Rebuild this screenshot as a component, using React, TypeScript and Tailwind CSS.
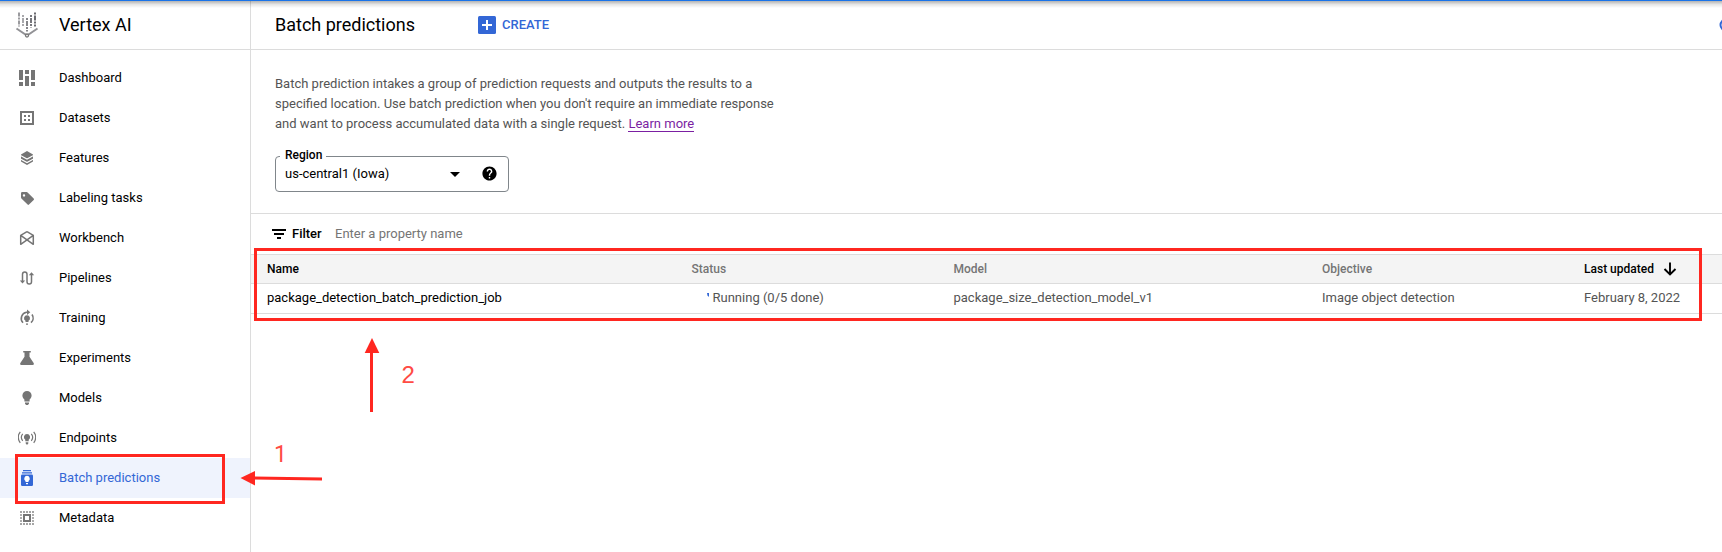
import type { ReactNode } from 'react';
import { MdHelp } from 'react-icons/md';

function Icon({ children }: { children: ReactNode }) {
  return (
    <svg width="18" height="18" viewBox="0 0 18 18" fill="currentColor" className="shrink-0">
      {children}
    </svg>
  );
}

const bulb = 'M9 2a4.6 4.6 0 0 0-4.6 4.6c0 1.7.9 3 2 4V12.4h5.2v-1.8c1.1-1 2-2.3 2-4A4.6 4.6 0 0 0 9 2zM7 13.6h4v1.1L9.9 16H8.1L7 14.7z';

const icons: Record<string, ReactNode> = {
  Dashboard: <path d="M1 1h4v10H1zM1 13h4v4H1zM7 1h4v4H7zM7 7h4v10H7zM13 1h4v10h-4zM13 13h4v4h-4z" />,
  Datasets: <path fillRule="evenodd" d="M2 2h14v14H2zM4 4v10h10V4zM6 6h2v2H6zM10 6h2v2h-2zM6 10h2v2H6zM10 10h2v2h-2z" />,
  Features: (
    <>
      <path d="M9 2l6 3.4v7.2L9 16l-6-3.4V5.4z" />
      <path d="M2.5 6.500L9 10.100l6.500-3.600M2.500 9.900L9 13.500l6.500-3.600" fill="none" stroke="#fff" strokeWidth="1.100" />
    </>
  ),
  'Labeling tasks': <path fillRule="evenodd" d="M4.200 3H8.700l.9.4 6.100 6.100q.7.7 0 1.400l-4.700 4.700q-.7.6-1.400 0L3.400 9.500 3 8.600V4.200Q3 3 4.200 3zM6 5.200a1.200 1.200 0 1 0 0 2.400 1.200 1.200 0 0 0 0-2.400z" />,
  Workbench: <path d="M9 2.600L2.700 6.300v9L15.300 6.300 9 2.600M15.300 6.300v9L2.700 6.300" fill="none" stroke="currentColor" strokeWidth="1.500" strokeLinejoin="round" />,
  Pipelines: (
    <>
      <path d="M4.500 13V5.200a2.200 2.200 0 0 1 4.500 0v7.600a2.200 2.200 0 0 0 4.500 0V5" fill="none" stroke="currentColor" strokeWidth="1.500" />
      <path d="M1.800 11.500h5.400L4.500 14.500zM10.800 6.200h5.400L13.500 3.200z" />
    </>
  ),
  Training: (
    <>
      <path d="M5 13.700A6.200 6.200 0 0 1 8.500 3.300h1.500M14 5.500a6.200 6.200 0 0 1-1 8.200" fill="none" stroke="currentColor" strokeWidth="1.600" />
      <path d="M9 .5l3.300 2.800L9 6.100zM9 6.200a3 3 0 0 0-1.500 5.600V13h3v-1.200A3 3 0 0 0 9 6.200zM8 14.400h2v1.400H8z" />
    </>
  ),
  Experiments: <path d="M5.200 2h7.600v1.500h-1.300v4.300l4.300 6.400q.7 1.800-1.100 1.800H3.300q-1.800 0-1.100-1.800l4.300-6.400V3.500H5.200z" />,
  Models: <path d={bulb} />,
  Endpoints: (
    <>
      <path d="M9 5a3.100 3.100 0 0 0-1.700 5.700V12.300h3.400v-1.600A3.100 3.100 0 0 0 9 5zM7.700 13.300h2.600v1.200l-.7.900H8.400l-.7-.9z" />
      <path d="M4.700 4.800a5.600 5.600 0 0 0 0 7M13.300 4.800a5.600 5.600 0 0 1 0 7M2.300 2.800a8.500 8.500 0 0 0 0 11M15.700 2.800a8.500 8.500 0 0 1 0 11" fill="none" stroke="currentColor" strokeWidth="1.200" />
    </>
  ),
  'Batch predictions': (
    <>
      <path d="M5 1h8v1.200H5zM4 3.200h10v1.300H4z" />
      <rect x="3" y="5.500" width="12" height="11.500" rx="1.200" />
      <path d="M9 6.800a2.900 2.900 0 0 0-1.500 5.300v1h3v-1A2.900 2.900 0 0 0 9 6.800zM8 14h2v1.200H8z" fill="#fff" />
    </>
  ),
  Metadata: (
    <>
      <path d="M6 6h6v6H6z" fill="none" stroke="currentColor" strokeWidth="2" />
      <path d="M2 3h14M2 15h14M3 2v14M15 2v14" fill="none" stroke="currentColor" strokeWidth="1.800" strokeDasharray="2 1" opacity=".65" />
    </>
  ),
};

function VertexLogo() {
  return (
    <svg width="24" height="28" viewBox="0 -1 24 28" fill="none" className="shrink-0">
      <path d="M4 .5v14" stroke="#9a9a9e" strokeWidth="2" strokeDasharray="4 1 2 1" />
      <path d="M8 3v12" stroke="#a8a8ac" strokeWidth="2" strokeDasharray="2 1 5 1" />
      <path d="M12 6v13.500" stroke="#85858a" strokeWidth="2" strokeDasharray="2 1 5 1" />
      <path d="M16 3v12.500" stroke="#77777c" strokeWidth="2" strokeDasharray="2 1 5 1" />
      <path d="M20 .5v14" stroke="#6b6b70" strokeWidth="2" strokeDasharray="2 1 5 1" />
      <path d="M1.500 16.500L12 23.500l10.500-7" stroke="#929296" strokeWidth="2" />
      <circle cx="12" cy="23.500" r="1.500" fill="#fff" stroke="#777" strokeWidth="1.300" />
    </svg>
  );
}

const columns = 'grid grid-cols-[424.5px_262px_368.500px_262px_1fr] items-center pl-4';

export default function App() {
  return (
    <div className="relative flex h-[552px] w-full overflow-hidden bg-white text-[13px] text-black" style={{ fontFamily: 'Roboto, sans-serif' }}>
      <aside className="w-[251px] shrink-0 border-r border-[#dcdcdc]">
        <div className="flex h-[50px] items-center border-b border-[#dcdcdc] pl-[15px]">
          <VertexLogo />
          <h2 className="ml-5 text-[18px]">Vertex AI</h2>
        </div>
        <nav className="pt-2">
          {Object.keys(icons).map((name) => (
            <a
              key={name}
              className={
                name === 'Batch predictions'
                  ? 'flex h-10 items-center gap-[23px] bg-[#eff3fd] pl-[18px] text-[#3367d6]'
                  : 'flex h-10 items-center gap-[23px] pl-[18px]'
              }
            >
              <span className={name === 'Batch predictions' ? 'text-[#3367d6]' : 'text-[#757575]'}>
                <Icon>{icons[name]}</Icon>
              </span>
              <span>{name}</span>
            </a>
          ))}
        </nav>
      </aside>

      <main className="min-w-0 flex-1">
        <header className="flex h-[50px] items-center overflow-hidden border-b border-[#dcdcdc] pl-6">
          <h1 className="w-[203px] text-[18px]">Batch predictions</h1>
          <button className="flex items-center gap-1.5 font-medium text-[#3367d6]">
            <svg width="18" height="18" viewBox="0 0 18 18">
              <rect width="18" height="18" rx="1.500" fill="#3367d6" />
              <path d="M9 4v10M4 9h10" stroke="#fff" strokeWidth="2" />
            </svg>
            CREATE
          </button>
          <svg width="14" height="14" viewBox="0 0 14 14" className="-mr-[11px] ml-auto">
            <circle cx="7" cy="7" r="5.500" fill="none" stroke="#3367d6" strokeWidth="2" />
          </svg>
        </header>

        <section className="h-[164px] border-b border-[#dcdcdc] pt-6 pl-6">
          <p className="leading-5 whitespace-nowrap text-[#545454]">
            Batch prediction intakes a group of prediction requests and outputs the results to a<br />
            specified location. Use batch prediction when you don't require an immediate response<br />
            and want to process accumulated data with a single request.{' '}
            <a className="border-b border-[#7b1fa2] text-[#7b1fa2]">Learn more</a>
          </p>
          <div className="relative mt-[22px] flex h-9 w-[234px] items-center rounded border border-[#80868b] pl-[9px]">
            <span className="absolute -top-[10px] left-1 bg-white pr-1 pl-[5px] text-[12px] leading-4 font-medium">Region</span>
            <span className="w-[165px]">us-central1 (Iowa)</span>
            <svg width="10" height="5" viewBox="0 0 10 5"><path d="M0 0h10L5 5z" /></svg>
            <MdHelp size={17} className="mb-px ml-[20.5px]" />
          </div>
        </section>

        <div className="flex h-10 items-center pl-[21px]">
          <svg width="14" height="10" viewBox="0 0 14 10"><path d="M0 0h14v2H0zM2 4h10v2H2zM5 8h4v2H5z" /></svg>
          <span className="ml-1.5 w-[43px] font-medium">Filter</span>
          <span className="text-[#757575]">Enter a property name</span>
        </div>
        <div className={`${columns} h-[30px] border-y border-[#dcdcdc] bg-[#f4f4f4] text-[12px] font-medium text-[#757575]`}>
          <span className="text-black">Name</span>
          <span>Status</span>
          <span>Model</span>
          <span>Objective</span>
          <span className="flex items-center gap-[9px] text-black">
            Last updated
            <svg width="14" height="14" viewBox="0 0 14 14">
              <path d="M7 .5v11.500M1.500 7L7 12.500 12.500 7" fill="none" stroke="currentColor" strokeWidth="1.900" />
            </svg>
          </span>
        </div>
        <div className={`${columns} h-[30px] border-b border-[#dcdcdc] pb-[2px] text-[#545454]`}>
          <span className="text-black">package_detection_batch_prediction_job</span>
          <span className="flex items-center pl-[15px]">
            <svg width="6" height="12" viewBox="0 0 6 12"><path d="M0 1h2v4L.5 3.500z" fill="#3367d6" /></svg>
            Running (0/5 done)
          </span>
          <span>package_size_detection_model_v1</span>
          <span>Image object detection</span>
          <span>February 8, 2022</span>
        </div>
      </main>

      <div className="absolute inset-x-0 top-0 h-[8px] border-t border-[#1a73e8] bg-linear-to-b from-black/30 via-black/10 to-transparent" />

      <div className="absolute top-[454px] left-[15px] h-[50px] w-[210px] border-3 border-[#ff2720]" />
      <div className="absolute top-[248px] left-[254px] h-[73px] w-[1448px] border-3 border-[#ff2720]" />
      <svg className="absolute top-[470px] left-[240px]" width="84" height="17" viewBox="0 0 84 17" fill="#ff2720">
        <path d="M.5 8L15 1v14.500z" />
        <path d="M14 6.500l68 1v3l-68-1z" />
      </svg>
      <svg className="absolute top-[337px] left-[364px]" width="17" height="76" viewBox="0 0 17 76" fill="#ff2720">
        <path d="M8 1L.700 16h14.600z" />
        <path d="M6 15h3v60H6z" />
      </svg>
      <span className="absolute top-[441px] left-[274px] text-[23px] leading-7 text-[#ff4b44]">1</span>
      <span className="absolute top-[361px] left-[401.5px] text-[24px] leading-7 text-[#ff4b44]" style={{ fontFamily: '"Liberation Sans", sans-serif' }}>2</span>
    </div>
  );
}
